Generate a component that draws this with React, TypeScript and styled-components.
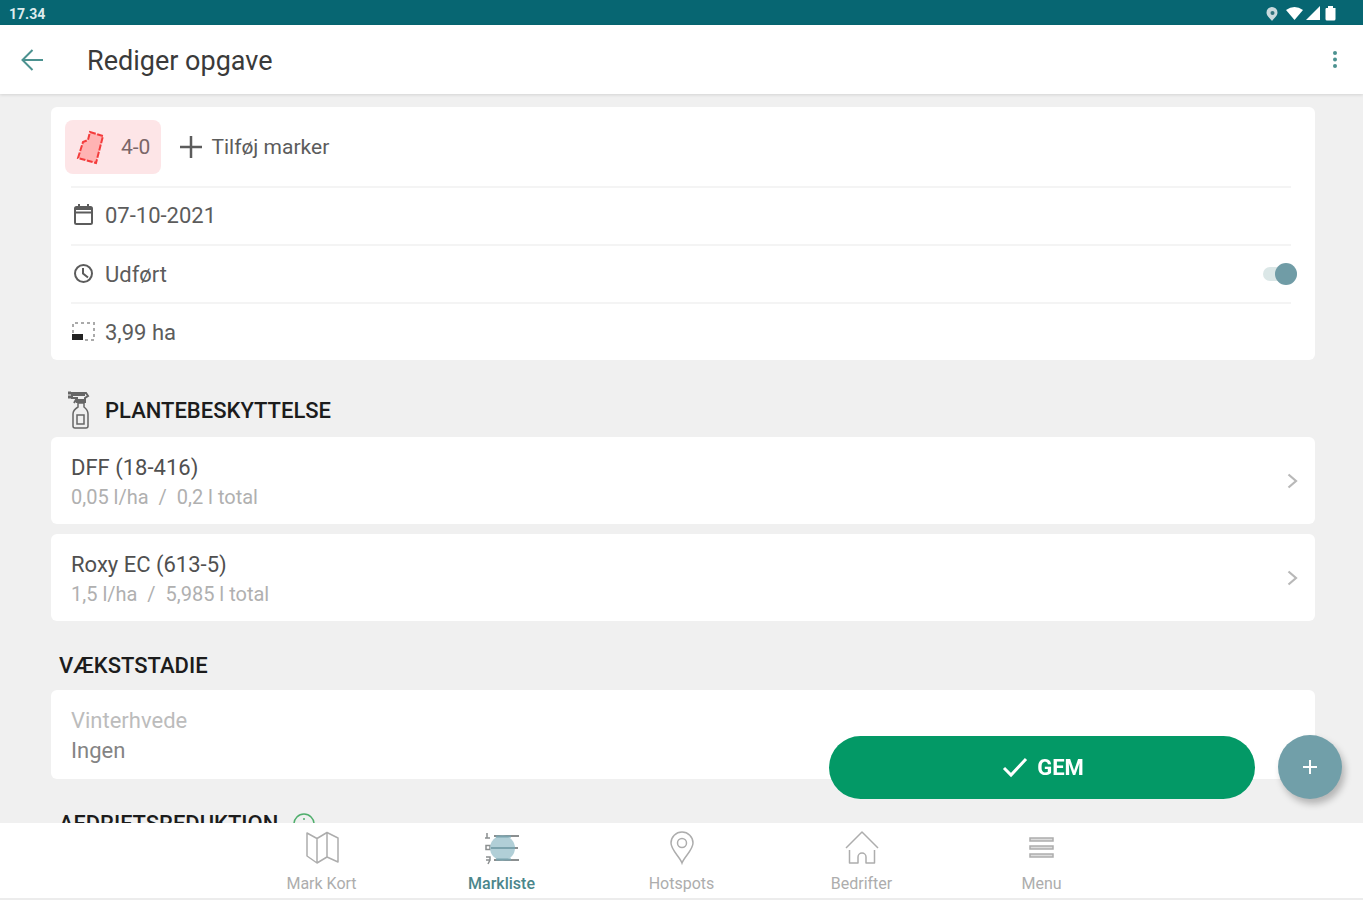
import React from "react";
import styled, { createGlobalStyle } from "styled-components";

const GlobalStyle = createGlobalStyle`
  * { box-sizing: border-box; }
  body {
    margin: 0;
    background: #f0f0f0;
    font-family: Roboto, "Liberation Sans", sans-serif;
    color: #5c5c5c;
  }
  button, input { font: inherit; color: inherit; }
  button { border: 0; padding: 0; background: none; cursor: pointer; }
  svg { display: block; flex: none; }
`;

const Screen = styled.div`
  display: flex;
  flex-direction: column;
  height: 100vh;
`;

const StatusBar = styled.div`
  display: flex;
  flex: none;
  align-items: center;
  justify-content: space-between;
  height: 25px;
  padding: 2px 25px 0 9px;
  background: #076672;
  color: #dcebed;
  font-size: 14px;
  font-weight: 700;
`;

const StatusIcons = styled.div`
  display: flex;
  align-items: center;
  gap: 3px;
`;

const Header = styled.header`
  display: flex;
  flex: none;
  align-items: center;
  height: 69px;
  padding: 0 20px;
  background: #fff;
  box-shadow: 0 1px 3px rgba(0, 0, 0, 0.12);
  z-index: 1;
`;

const Title = styled.h1`
  flex: 1;
  margin: 0 0 0 43px;
  padding-top: 3px;
  color: #3a3a3a;
  font-size: 27px;
  font-weight: 400;
  line-height: 32px;
`;

const IconButton = styled.button`
  display: flex;
  align-items: center;
  justify-content: center;
  color: #4c9290;
`;

const Content = styled.main`
  flex: 1;
  min-height: 0;
  padding: 13px 48px 0 51px;
  overflow: hidden;
`;

const Card = styled.section`
  background: #fff;
  border-radius: 6px;
`;

const FieldRow = styled.div`
  display: flex;
  align-items: center;
  gap: 18px;
  height: 79px;
  padding: 0 14px;
`;

const FieldChip = styled.button`
  display: flex;
  align-items: center;
  gap: 16px;
  height: 54px;
  padding: 0 11px 0 10px;
  border-radius: 8px;
  background: #fde5e7;
  color: #7a6668;
  font-size: 21px;
`;

const AddButton = styled.button`
  display: flex;
  align-items: center;
  gap: 8px;
  font-size: 21px;
`;

const DetailRow = styled.div`
  display: flex;
  align-items: center;
  gap: 9px;
  height: 58px;
  margin: 0 24px 0 20px;
  border-top: 2px solid #f4f4f4;
  font-size: 22px;
`;

const DetailLabel = styled.label`
  flex: 1;
`;

const DateButton = styled.button`
  line-height: 28px;
`;

const AreaInput = styled.input`
  width: 120px;
  padding: 0;
  border: 0;
  background: none;
  outline: none;
`;

const Toggle = styled.input`
  display: flex;
  align-items: center;
  justify-content: flex-end;
  width: 34px;
  height: 14px;
  margin: 0 -6px 0 0;
  appearance: none;
  border-radius: 7px;
  background: #dbe7e7;
  cursor: pointer;

  &::before {
    content: "";
    flex: none;
    width: 22px;
    height: 22px;
    border-radius: 50%;
    background: #709ca6;
  }

  &:not(:checked) { justify-content: flex-start; }
`;

const SectionTitle = styled.h2<{ $tall?: boolean }>`
  display: flex;
  align-items: center;
  gap: 14px;
  height: ${(p) => (p.$tall ? 77 : 69)}px;
  margin: 0;
  padding: ${(p) => (p.$tall ? "24px 0 0 16px" : "21px 0 0 8px")};
  color: #1c1c1c;
  font-size: 22px;
  font-weight: 500;
  line-height: 26px;
`;

const ProductList = styled.div`
  display: flex;
  flex-direction: column;
  gap: 10px;
`;

const ItemCard = styled.button<{ $tall?: boolean }>`
  display: flex;
  align-items: center;
  justify-content: space-between;
  width: 100%;
  height: ${(p) => (p.$tall ? 89 : 87)}px;
  padding: 2px 15px 0 20px;
  border-radius: 6px;
  background: #fff;
  text-align: left;
`;

const ItemText = styled.span`
  display: flex;
  flex-direction: column;
`;

const ItemName = styled.span`
  color: #505050;
  font-size: 22px;
  line-height: 30px;
`;

const ItemDose = styled.span`
  color: #b0b0b0;
  font-size: 20px;
  line-height: 28px;
  white-space: pre;
`;

const StageCrop = styled.span`
  color: #bcbcbc;
  font-size: 22px;
  line-height: 30px;
`;

const StageValue = styled.span`
  color: #848484;
  font-size: 22px;
  line-height: 30px;
`;

const Actions = styled.div`
  position: fixed;
  right: 21px;
  bottom: 101px;
  display: flex;
  align-items: center;
  gap: 23px;
`;

const SaveButton = styled.button`
  display: flex;
  align-items: center;
  justify-content: center;
  gap: 9px;
  width: 426px;
  height: 63px;
  padding-left: 2px;
  border-radius: 32px;
  background: #039966;
  color: #fff;
  font-size: 22px;
  font-weight: 700;
`;

const RoundButton = styled.button`
  display: flex;
  align-items: center;
  justify-content: center;
  width: 64px;
  height: 64px;
  border-radius: 50%;
  background: #719fa9;
  box-shadow: 3px 5px 7px rgba(0, 0, 0, 0.25);
  color: #fff;
`;

const BottomNav = styled.nav`
  display: flex;
  flex: none;
  justify-content: center;
  height: 77px;
  background: #fff;
  border-bottom: 2px solid #ececec;
`;

const NavItem = styled.a<{ $active?: boolean }>`
  display: flex;
  flex: 0 1 180px;
  flex-direction: column;
  align-items: center;
  gap: 8px;
  padding-top: 7px;
  color: ${(p) => (p.$active ? "#4b868b" : "#adadad")};
  font-size: 16px;
  font-weight: ${(p) => (p.$active ? 500 : 400)};
  line-height: 20px;
  text-decoration: none;
`;

const stroke = { fill: "none", stroke: "currentColor" } as const;

const MapIcon = () => (
  <svg width="36" height="36" viewBox="0 0 36 36" {...stroke} strokeWidth="1.5" strokeLinejoin="round">
    <path d="M3 3 13 8.500 23 2.500 34 8V32L23 27 13 33 3 26ZM13 8.500V33M23 2.500V27" />
  </svg>
);

const ListIcon = () => (
  <svg width="36" height="36" viewBox="0 0 36 36" {...stroke}>
    <g stroke="#8b8f90" strokeWidth="2">
      <path d="M10 6H35M10 18H34M10 30H35" />
      <path d="M3 3V8M1 8H6M2 15.500H6V19.500H2ZM2 27H6V30H2M6 30 4 34" strokeWidth="1.500" />
    </g>
    <circle cx="18.500" cy="18" r="12.500" fill="#a3c7d0" fillOpacity="0.85" stroke="none" />
    <path d="M7 18H31M12 6.500H27M12 29.500H27" stroke="#7ba3ad" strokeWidth="2" />
  </svg>
);

const PinIcon = () => (
  <svg width="36" height="36" viewBox="0 0 36 36" {...stroke} strokeWidth="1.500">
    <path d="M18 33C16 27 7 20 7 13a11 11 0 0 1 22 0C29 20 20 27 18 33Z" />
    <circle cx="18" cy="13" r="4.500" />
  </svg>
);

const HomeIcon = () => (
  <svg width="36" height="36" viewBox="0 0 36 36" {...stroke} strokeWidth="1.500" strokeLinejoin="round">
    <path d="M2 18 18 2 34 18" />
    <path d="M5.500 20V33H14V27a4 4 0 0 1 8 0V33H30.500V20" />
  </svg>
);

const MenuIcon = () => (
  <svg width="36" height="36" viewBox="0 0 36 36" fill="#ddd" stroke="currentColor" strokeWidth="1.500">
    <path d="M6 8H29V11H6ZM6 16H29V19H6ZM6 24H29V27H6Z" />
  </svg>
);

const ChevronIcon = () => (
  <svg width="14" height="18" viewBox="0 0 14 18" fill="none" stroke="#b8b8b8" strokeWidth="2.200">
    <path d="M2.500 1.500 10 8 2.500 14.500" />
  </svg>
);

const products = [
  { name: "DFF (18-416)", dose: "0,05 l/ha  /  0,2 l total" },
  { name: "Roxy EC (613-5)", dose: "1,5 l/ha  /  5,985 l total" },
];

const navItems = [
  { label: "Mark Kort", icon: <MapIcon /> },
  { label: "Markliste", icon: <ListIcon />, active: true },
  { label: "Hotspots", icon: <PinIcon /> },
  { label: "Bedrifter", icon: <HomeIcon /> },
  { label: "Menu", icon: <MenuIcon /> },
];

export default function App() {
  return (
    <Screen>
      <GlobalStyle />
      <StatusBar>
        <span>17.34</span>
        <StatusIcons>
          <svg width="20" height="16" viewBox="0 0 20 16" fill="#c9dadd">
            <path d="M9 1a5.500 5.500 0 0 1 5.500 5.500C14.500 10 11 12 9 15 7 12 3.500 10 3.500 6.500A5.500 5.500 0 0 1 9 1Z" />
            <circle cx="9.500" cy="7" r="2" fill="#31737c" />
          </svg>
          <svg width="17" height="15" viewBox="0 0 17 15" fill="#fff">
            <path d="M0 4Q8.500-2 17 4L8.500 14Z" />
          </svg>
          <svg width="14" height="15" viewBox="0 0 14 15" fill="#fff">
            <path d="M0 14 14 0V14Z" />
          </svg>
          <svg width="15" height="15" viewBox="0 0 15 15" fill="#fff">
            <path d="M3 2H5V0H10V2H12.500V13Q12.500 14.500 11 14.500H4Q2.500 14.500 2.500 13V3Z" />
          </svg>
        </StatusIcons>
      </StatusBar>

      <Header>
        <IconButton aria-label="Tilbage">
          <svg width="24" height="24" viewBox="0 0 24 24" {...stroke} strokeWidth="2">
            <path d="M23 12H3M12.500 2 2.500 12 12.500 22" />
          </svg>
        </IconButton>
        <Title>Rediger opgave</Title>
        <IconButton aria-label="Flere valg">
          <svg width="16" height="20" viewBox="0 0 16 20" fill="currentColor">
            <circle cx="8" cy="3" r="2" />
            <circle cx="8" cy="9.500" r="2" />
            <circle cx="8" cy="16" r="2" />
          </svg>
        </IconButton>
      </Header>

      <Content>
        <Card>
          <FieldRow>
            <FieldChip>
              <svg width="30" height="36" viewBox="0 0 30 36" fill="#ffb3b3" stroke="#f43b3b" strokeWidth="2">
                <path d="M15 3 28 7 21 34 3 29 8 13 13 11Z" strokeDasharray="6 1.500" />
              </svg>
              4-0
            </FieldChip>
            <AddButton>
              <svg width="24" height="24" viewBox="0 0 24 24" {...stroke} strokeWidth="2.500">
                <path d="M12 1V23M1 12H23" />
              </svg>
              Tilføj marker
            </AddButton>
          </FieldRow>
          <DetailRow>
            <svg width="25" height="24" viewBox="0 0 25 24" {...stroke} strokeWidth="2">
              <rect x="4" y="3" width="17" height="17" rx="1.500" />
              <path d="M4 5H21M4 8.500H21M8 0V4M17 0V4" />
            </svg>
            <DateButton>07-10-2021</DateButton>
          </DetailRow>
          <DetailRow>
            <svg width="25" height="24" viewBox="0 0 25 24" {...stroke} strokeWidth="2">
              <circle cx="12.500" cy="11.500" r="8.500" />
              <path d="M12 6V11.500L17 15.500" />
            </svg>
            <DetailLabel htmlFor="done">Udført</DetailLabel>
            <Toggle id="done" type="checkbox" defaultChecked />
          </DetailRow>
          <DetailRow>
            <svg width="25" height="24" viewBox="0 0 25 24" {...stroke} strokeWidth="2">
              <path d="M2 13V3H23V20H14" stroke="#aaa" strokeDasharray="3 3" />
              <rect x="1" y="14" width="11" height="6" fill="#222" stroke="none" />
            </svg>
            <AreaInput aria-label="Areal" defaultValue="3,99 ha" />
          </DetailRow>
        </Card>

        <SectionTitle $tall>
          <svg width="24" height="40" viewBox="0 0 24 40" fill="none" stroke="#666" strokeWidth="1.500">
            <path d="M5 2H19L21 5 18 7V11H10V7H5ZM10 7 7 12M6 4H18M10 9H18" strokeWidth="2" />
            <path d="M1 2H4M1 6H4" strokeWidth="3" />
            <path d="M11 12H17V16Q21 19 21 23V35Q21 37 19 37H8Q6 37 6 35V23Q6 19 11 16V12" />
            <path d="M10 24H17V33H10Z" />
          </svg>
          PLANTEBESKYTTELSE
        </SectionTitle>
        <ProductList>
          {products.map((p) => (
            <ItemCard key={p.name}>
              <ItemText>
                <ItemName>{p.name}</ItemName>
                <ItemDose>{p.dose}</ItemDose>
              </ItemText>
              <ChevronIcon />
            </ItemCard>
          ))}
        </ProductList>

        <SectionTitle>VÆKSTSTADIE</SectionTitle>
        <ItemCard $tall>
          <ItemText>
            <StageCrop>Vinterhvede</StageCrop>
            <StageValue>Ingen</StageValue>
          </ItemText>
        </ItemCard>

        <SectionTitle>
          AFDRIFTSREDUKTION
          <svg width="24" height="24" viewBox="0 0 24 24" fill="none" stroke="#4fae6c" strokeWidth="1.500">
            <circle cx="12" cy="12" r="10" />
            <path d="M12 11V17M12 6V8" />
          </svg>
        </SectionTitle>
      </Content>

      <Actions>
        <SaveButton>
          <svg width="26" height="22" viewBox="0 0 26 22" {...stroke} strokeWidth="3">
            <path d="M2 12 9 19 24 3" />
          </svg>
          GEM
        </SaveButton>
        <RoundButton aria-label="Tilføj">
          <svg width="16" height="16" viewBox="0 0 16 16" {...stroke} strokeWidth="2">
            <path d="M8 1V15M1 8H15" />
          </svg>
        </RoundButton>
      </Actions>

      <BottomNav>
        {navItems.map((n) => (
          <NavItem key={n.label} href="#" $active={n.active}>
            {n.icon}
            {n.label}
          </NavItem>
        ))}
      </BottomNav>
    </Screen>
  );
}
